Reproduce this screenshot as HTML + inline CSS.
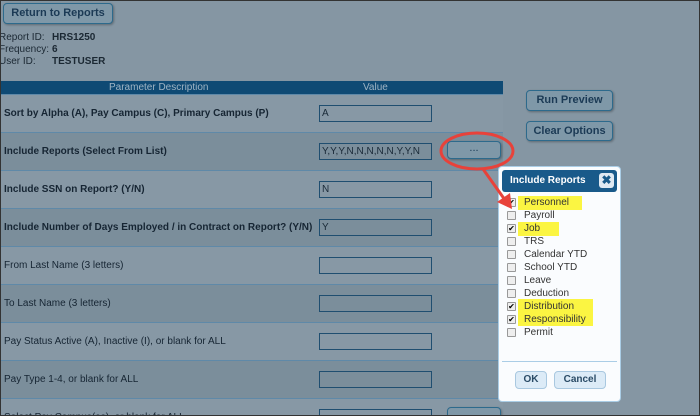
<!DOCTYPE html><html><head><style>
*{margin:0;padding:0;box-sizing:border-box}
html,body{width:700px;height:416px;overflow:hidden}
body{font-family:"Liberation Sans",sans-serif}
#w{position:relative;width:700px;height:416px;overflow:hidden;background:#8596a3;border:1px solid #333}
.abs{position:absolute}
.btn{position:absolute;border:1px solid #2d6a8c;border-radius:4px;background:#7f98a8;color:#1b3a55;font-weight:bold;font-size:11px;text-align:center;box-shadow:1px 1px 2px rgba(0,0,0,.3)}
.info{font-size:10px;color:#1b2833}
.row{position:absolute;left:0;width:502px;height:38px;border-top:1px solid #5f89a8}
.row span{position:absolute;left:3px;top:13px;font-size:10px;color:#162533}
.row i{position:absolute;left:318px;top:10px;width:113px;height:17px;border:1px solid #1f4e70;font-style:normal;font-size:10px;color:#1a2a38;padding:2px 2px}
.pop{position:absolute;left:497px;top:165px;width:123px;height:236px;background:#fafcfe;border:1px solid #aacde6;border-radius:4px}
.it{position:absolute;left:22px;font-size:10px;color:#333}
.cb{position:absolute;left:8px;width:9px;height:9px;border:1px solid #999;background:#eee;border-radius:1px;font-size:8px;line-height:7px;text-align:center}
.hl{position:absolute;background:#fbf542}
</style></head><body><div id="w">
<div class="btn" style="left:2px;top:2px;width:110px;height:21px;line-height:19px">Return to Reports</div>
<div class="abs info" style="left:-2px;top:31px;line-height:12px">Report ID:<br>Frequency:<br>User ID:</div>
<div class="abs info" style="left:51px;top:31px;line-height:12px;font-weight:bold">HRS1250<br>6<br>TESTUSER</div>
<div class="abs" style="left:0;top:80px;width:502px;height:13px;background:#0f4a74;color:#9fb4c4;font-size:10px;line-height:13px"><span style="position:absolute;left:108px">Parameter Description</span><span style="position:absolute;left:362px">Value</span></div>
<div class="row" style="top:93px;background:#8798a5"><span style="font-weight:bold">Sort by Alpha (A), Pay Campus (C), Primary Campus (P)</span><i>A</i></div>
<div class="row" style="top:131px;background:#7b8e9b"><span style="font-weight:bold">Include Reports (Select From List)</span><i>Y,Y,Y,N,N,N,N,N,Y,Y,N</i></div>
<div class="row" style="top:169px;background:#8798a5"><span style="font-weight:bold">Include SSN on Report? (Y/N)</span><i>N</i></div>
<div class="row" style="top:207px;background:#7b8e9b"><span style="font-weight:bold">Include Number of Days Employed / in Contract on Report? (Y/N)</span><i>Y</i></div>
<div class="row" style="top:245px;background:#8798a5"><span>From Last Name (3 letters)</span><i></i></div>
<div class="row" style="top:283px;background:#7b8e9b"><span>To Last Name (3 letters)</span><i></i></div>
<div class="row" style="top:321px;background:#8798a5"><span>Pay Status Active (A), Inactive (I), or blank for ALL</span><i></i></div>
<div class="row" style="top:359px;background:#7b8e9b"><span>Pay Type 1-4, or blank for ALL</span><i></i></div>
<div class="row" style="top:397px;background:#8798a5"><span>Select Pay Campus(es), or blank for ALL</span><i></i></div>
<div class="btn" style="left:446px;top:140px;width:54px;height:18px;line-height:12px;font-weight:normal">...</div>
<div class="btn" style="left:446px;top:406px;width:54px;height:18px"></div>
<div class="btn" style="left:525px;top:89px;width:87px;height:21px;line-height:19px">Run Preview</div>
<div class="btn" style="left:525px;top:120px;width:87px;height:20px;line-height:18px">Clear Options</div>
<div class="pop">
<div class="abs" style="left:3px;top:3px;width:115px;height:22px;background:#195a8a;border-radius:3px;color:#fff;font-weight:bold;font-size:10px;line-height:22px;padding-left:8px">Include Reports</div>
<div class="abs" style="left:100px;top:6px;width:15px;height:15px;background:#dfe9f2;border-radius:3px;color:#195a8a;font-weight:bold;font-size:12px;line-height:15px;text-align:center">✖</div>
<div class="hl" style="left:19px;top:29px;width:64px;height:14px"></div>
<div class="hl" style="left:19px;top:55px;width:41px;height:14px"></div>
<div class="hl" style="left:19px;top:132px;width:75px;height:27px"></div>
<div class="cb" style="top:31px">✔</div><div class="it" style="top:30px;left:25px">Personnel</div>
<div class="cb" style="top:44px"></div><div class="it" style="top:43px;left:25px">Payroll</div>
<div class="cb" style="top:57px">✔</div><div class="it" style="top:56px;left:25px">Job</div>
<div class="cb" style="top:70px"></div><div class="it" style="top:69px;left:25px">TRS</div>
<div class="cb" style="top:83px"></div><div class="it" style="top:82px;left:25px">Calendar YTD</div>
<div class="cb" style="top:96px"></div><div class="it" style="top:95px;left:25px">School YTD</div>
<div class="cb" style="top:109px"></div><div class="it" style="top:108px;left:25px">Leave</div>
<div class="cb" style="top:122px"></div><div class="it" style="top:121px;left:25px">Deduction</div>
<div class="cb" style="top:135px">✔</div><div class="it" style="top:134px;left:25px">Distribution</div>
<div class="cb" style="top:148px">✔</div><div class="it" style="top:147px;left:25px">Responsibility</div>
<div class="cb" style="top:161px"></div><div class="it" style="top:160px;left:25px">Permit</div>
<div class="abs" style="left:3px;top:194px;width:115px;border-top:1px solid #aacde6"></div>
<div class="abs" style="left:16px;top:204px;width:32px;height:18px;background:#dcebf7;border:1px solid #a9c8e0;border-radius:4px;font-size:10px;font-weight:bold;color:#2a4b66;text-align:center;line-height:16px">OK</div>
<div class="abs" style="left:55px;top:204px;width:52px;height:18px;background:#dcebf7;border:1px solid #a9c8e0;border-radius:4px;font-size:10px;font-weight:bold;color:#2a4b66;text-align:center;line-height:16px">Cancel</div>
</div>
<svg class="abs" style="left:0;top:0" width="700" height="416"><ellipse cx="476" cy="150" rx="36" ry="18" fill="none" stroke="#e8423a" stroke-width="3"/><line x1="482" y1="168" x2="504" y2="199" stroke="#e8423a" stroke-width="3"/><polygon points="496,201 511,208 509,192" fill="#e8423a"/></svg>
</div></body></html>
